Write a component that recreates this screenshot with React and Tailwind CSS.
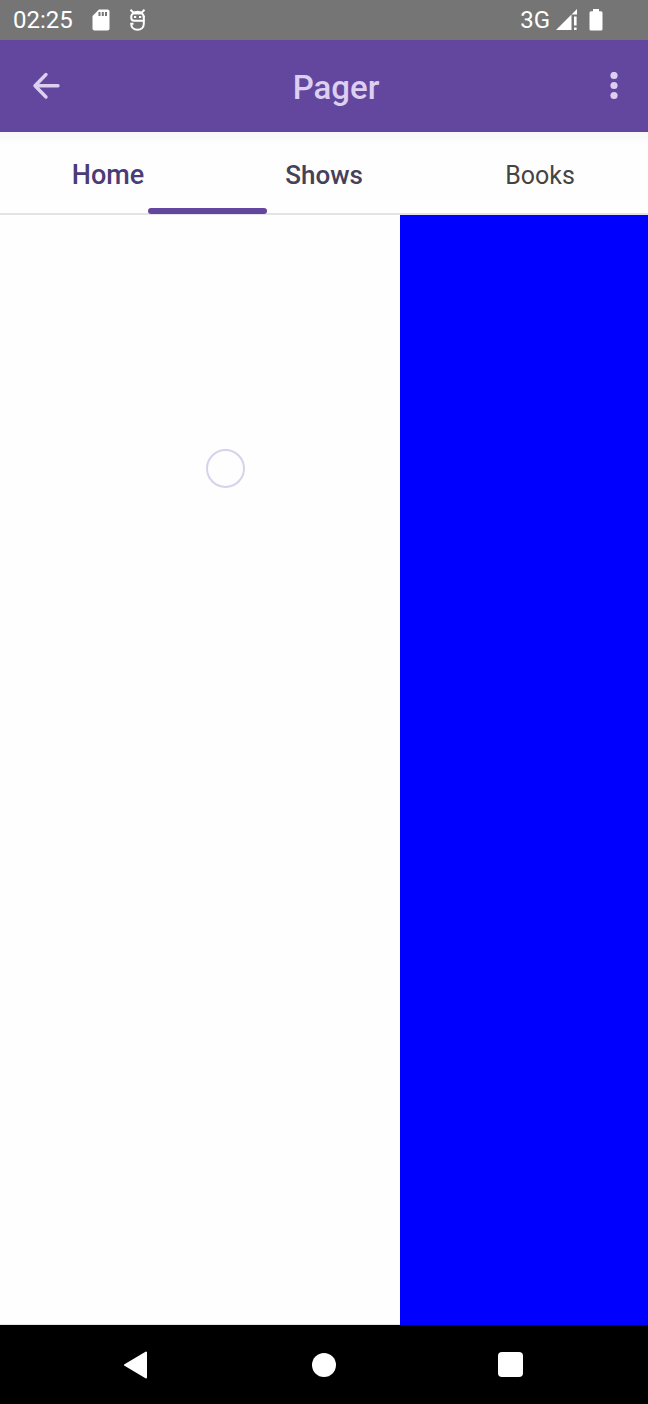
import { useState } from 'react'

const TABS = [
  { id: 'home', label: 'Home', style: 'text-[27px] font-medium text-[#4b3c77]' },
  { id: 'shows', label: 'Shows', style: 'text-[26px] font-medium text-[#464058]' },
  { id: 'books', label: 'Books', style: 'text-[25px] font-normal text-[#444444]' },
]

function StatusBar() {
  return (
    <div className="flex h-10 items-center justify-between bg-[#757575] pl-[13px] pr-[45px] text-white">
      <div className="flex items-center">
        <span className="text-2xl">02:25</span>
        <svg className="ml-[19px] h-[22px] w-[18px]" viewBox="0 0 18 22" fill="currentColor">
          <path d="M7 .5h8.500a2 2 0 0 1 2 2v17a2 2 0 0 1-2 2h-13a2 2 0 0 1-2-2V7z" />
          <path d="M6.500 3h2v4h-2zM9.800 3h2v4h-2zM13 3h2v4h-2z" fill="#757575" />
        </svg>
        <svg className="ml-[19px] h-[22px] w-[18px]" viewBox="0 0 18 22" fill="none" stroke="currentColor" strokeWidth="2">
          <path d="M1.500 .8l3 3M15.500 .8l-3 3" />
          <path d="M14.800 8.500C14.800 5 12 2.800 8.500 2.800S2.200 5 2.200 8.500c0 2 1 3.200 3 3.200h9.600v3c0 3.500-2.500 6-6.300 6s-6.300-2.500-6.300-6H4.500" />
          <path d="M3.500 4.200h10" strokeWidth="2.500" />
          <path d="M5 8h2.200M10 8h2.200" />
          <path d="M14.800 7v5" />
        </svg>
      </div>
      <div className="flex items-center">
        <span className="text-2xl">3G</span>
        <svg className="ml-1.5 h-[22px] w-[22px]" viewBox="0 0 22 22" fill="currentColor">
          <path d="M0 21L15.500 5.500V21z" />
          <path d="M15.500 5.500L21 0v5.500zM18 7.500h2.600v9H18zM18 18.500h2.600V21H18z" />
        </svg>
        <svg className="ml-[11px] h-[22px] w-[14px]" viewBox="0 0 14 22" fill="currentColor">
          <path d="M4 0h6v2.200h2a1.500 1.500 0 0 1 1.500 1.500V20a1.500 1.500 0 0 1-1.500 1.500H2A1.500 1.500 0 0 1 .5 20V3.700A1.500 1.500 0 0 1 2 2.200h2z" />
        </svg>
      </div>
    </div>
  )
}

function AppBar() {
  return (
    <header className="grid h-[92px] grid-cols-[1fr_auto_1fr] items-center bg-[#63479f] px-5 text-[#dccff0]">
      <button type="button" aria-label="Back" className="justify-self-start p-3">
        <svg className="h-7 w-7" viewBox="0 0 28 28" fill="none" stroke="currentColor" strokeWidth="3.4" strokeLinecap="round" strokeLinejoin="round">
          <path d="M14 2.500L3 13.800L14 25M3.500 13.800h22.500" />
        </svg>
      </button>
      <h1 className="pl-6 pt-1 text-[33px] font-medium">Pager</h1>
      <button type="button" aria-label="More options" className="justify-self-end px-2.5 py-3">
        <svg className="h-7 w-2" viewBox="0 0 8 28" fill="currentColor">
          <circle cx="4" cy="3.500" r="3.600" />
          <circle cx="4" cy="13.500" r="3.600" />
          <circle cx="4" cy="23.500" r="3.600" />
        </svg>
      </button>
    </header>
  )
}

function NavigationBar() {
  return (
    <nav className="grid h-[79px] grid-cols-3 place-items-center bg-black px-11 text-white">
      <button type="button" aria-label="Back">
        <svg className="h-7 w-[26px]" viewBox="0 0 26 28" fill="currentColor" stroke="currentColor" strokeWidth="2" strokeLinejoin="round">
          <path d="M1 14L22 1.500v25z" />
        </svg>
      </button>
      <button type="button" aria-label="Home" className="h-6 w-6 rounded-full bg-white" />
      <button type="button" aria-label="Recent apps" className="h-[25px] w-[25px] rounded-sm bg-white" />
    </nav>
  )
}

export default function App() {
  const [active, setActive] = useState('home')

  return (
    <div className="flex min-h-screen flex-col bg-[#fefefe] font-['Roboto',sans-serif]">
      <StatusBar />
      <AppBar />
      <div role="tablist" className="relative grid h-[83px] grid-cols-3 border-b-2 border-[#e4e4e4] bg-linear-to-b from-[#f8f6f6] to-[#fefefe] to-15%">
        {TABS.map(tab => (
          <button
            key={tab.id}
            type="button"
            role="tab"
            aria-selected={active === tab.id}
            onClick={() => setActive(tab.id)}
            className={`pt-1.5 ${tab.style}`}
          >
            {tab.label}
          </button>
        ))}
        {/* indicator is part way between the first two tabs */}
        <span className="absolute -bottom-px left-[22.8%] h-1.5 w-[18.4%] rounded-full bg-[#63479f]" />
      </div>
      <main className="relative flex flex-1">
        <section className="w-[61.7%] border-b border-[#e4e4e4]" />
        <section className="flex-1 bg-[#0000fe]" />
        {/* touch point of the swipe */}
        <span className="absolute left-[31.8%] top-[21.1%] h-[39px] w-[39px] rounded-full border-2 border-[#d8d1eb]" />
      </main>
      <NavigationBar />
    </div>
  )
}
